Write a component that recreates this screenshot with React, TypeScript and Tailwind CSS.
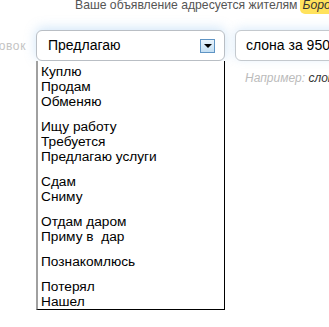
export default function App() {
  const groups = [
    ['Куплю', 'Продам', 'Обменяю'],
    ['Ищу работу', 'Требуется', 'Предлагаю услуги'],
    ['Сдам', 'Сниму'],
    ['Отдам даром', 'Приму в  дар'],
    ['Познакомлюсь'],
    ['Потерял', 'Нашел'],
  ]

  return (
    <main
      className="w-[329px] h-[327px] overflow-hidden bg-white flex flex-col"
      style={{ fontFamily: '"Liberation Sans", Arial, sans-serif' }}
    >
      {/* top hint */}
      <div className="h-[33px] -mt-[3px] pl-[75px] flex items-start whitespace-nowrap text-[12.2px] leading-[16px] text-[#555]">
        <span>Ваше объявление адресуется жителям</span>
        <span className="ml-[3px] px-[2px] pb-[1px] rounded-b-[5px] bg-[#ffe25c] italic text-[#333]">Бороденино</span>
      </div>

      <div className="flex items-start">
        {/* label */}
        <div className="w-[36px] shrink-0 h-[31px] pr-[10px] flex items-center justify-end overflow-hidden">
          <span className="text-[12px] tracking-[0.6px] text-[#c4c4c4] whitespace-nowrap">Заголовок</span>
        </div>

        {/* select + opened list */}
        <div className="w-[189px] shrink-0 flex flex-col">
          <div className="h-[31px] rounded-[6px] border border-[#b9bec4] bg-white shadow-[0_-2px_12px_rgba(120,180,235,0.35)] flex items-center pl-[11px]">
            <span className="text-[14px] text-black">Предлагаю</span>
            <div className="ml-auto mr-[9px] w-[15px] h-[14px] border border-[#5f94c4] bg-[linear-gradient(#eaf4fc,#c4dff3)] flex items-center justify-center">
              <div className="w-0 h-0 border-l-[4px] border-r-[4px] border-t-[4px] border-l-transparent border-r-transparent border-t-black" />
            </div>
          </div>
          <div className="h-[249px] bg-white border-l-[2px] border-l-[#a0a0a0] border-r border-r-black border-b border-b-black pt-[3px] pl-[3px]">
            {groups.map((g, i) => (
              <div key={i} className={i > 0 ? 'mt-[10px]' : ''}>
                {g.map(item => (
                  <div key={item} className="text-[13.7px] leading-[15px] text-black whitespace-pre">{item}</div>
                ))}
              </div>
            ))}
          </div>
        </div>

        {/* text input */}
        <div className="ml-[10px] flex flex-col shrink-0">
          <div className="w-[110px] h-[31px] rounded-[6px] border border-[#c4c9ce] bg-white shadow-[0_-2px_10px_rgba(120,180,235,0.25)] flex items-center pl-[10px]">
            <span className="text-[14px] text-black whitespace-nowrap">слона за 950</span>
          </div>
          <div className="mt-[8px] pl-[10px] text-[12px] italic text-[#bbb] whitespace-nowrap">
            Например: <span className="text-[#333]">слона за 950</span>
          </div>
        </div>
      </div>
    </main>
  )
}
